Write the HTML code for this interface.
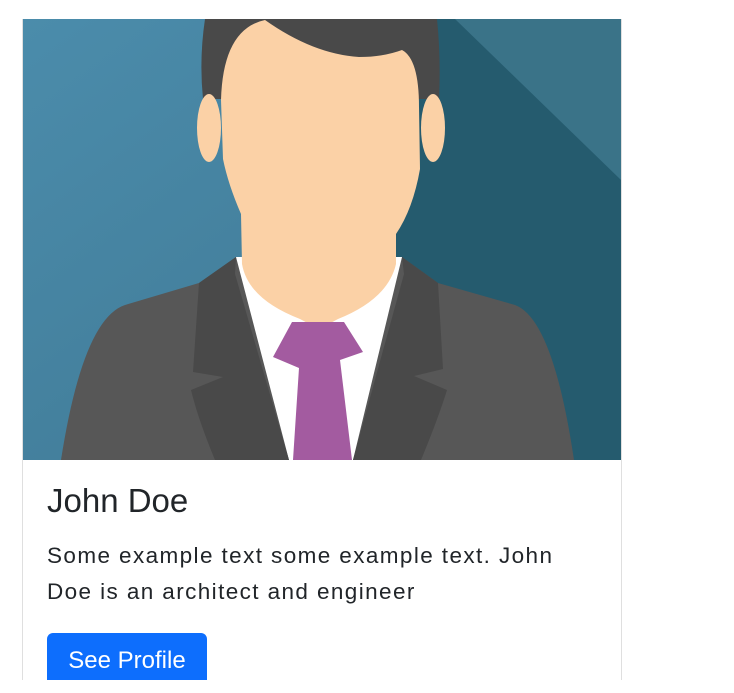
<!DOCTYPE html>
<html><head><meta charset="utf-8"><style>
html,body{margin:0;padding:0;background:#fff;width:734px;height:693px;overflow:hidden;font-family:"Liberation Sans",sans-serif;}
.card{position:absolute;left:22px;top:19px;width:598px;height:661px;border:1px solid #dfdfdf;border-top:none;border-bottom:none;overflow:hidden}
svg{display:block}
.t{position:absolute;left:24px;top:463px;font-size:33px;color:#212529;margin:0;font-weight:normal;white-space:nowrap}
.p{position:absolute;left:24px;top:519px;font-size:22.5px;line-height:36px;color:#212529;width:545px;margin:0;letter-spacing:1.4px}
.b{position:absolute;left:24px;top:614px;width:160px;height:60px;background:#0d6efd;border-radius:6px;color:#fff;font-size:24px;text-align:center;line-height:56px}
</style></head><body>
<div class="card">
<svg width="598" height="441" viewBox="0 0 598 441">
<defs><linearGradient id="g" x1="0" y1="0" x2="1" y2="1"><stop offset="0" stop-color="#4b8cab"/><stop offset="1" stop-color="#3d7590"/></linearGradient></defs>
<rect width="598" height="441" fill="url(#g)"/>
<polygon points="370,0 598,0 598,441 370,441" fill="#3a7388"/>
<polygon points="370,0 432,0 598,161 598,441 370,441" fill="#255b6e"/>
<path d="M182,0 L414,0 Q418,40 416,80 L180,80 Q176,40 182,0 Z" fill="#494949"/>
<ellipse cx="186" cy="109" rx="12" ry="34" fill="#fbd1a6"/>
<ellipse cx="410" cy="109" rx="12" ry="34" fill="#fbd1a6"/>
<path d="M213,238 L379,238 L382,280 L330,441 L266,441 L210,260 Z" fill="#fff"/>
<path d="M242,1 Q290,35 336,38 Q360,38 379,31 Q396,40 396,88 L397,150 Q390,190 373,215 L373,245 Q365,280 315,300 L300,308 L292,308 L277,300 Q225,280 219,245 L218,195 Q205,165 200,140 L198,81 Q200,10 242,1 Z" fill="#fbd1a6"/>
<path d="M38,441 Q60,300 102,286 L176,264 L213,238 L266,441 Z" fill="#575757"/>
<path d="M551,441 Q530,300 492,286 L415,264 L379,238 L330,441 Z" fill="#575757"/>
<path d="M213,238 L176,264 L170,353 L200,358 L168,371 Q175,400 192,441 L266,441 L212,255 Z" fill="#494949"/>
<path d="M379,238 L415,264 L420,350 L391,357 L424,371 Q415,400 398,441 L330,441 L381,255 Z" fill="#494949"/>
<path d="M269,303 L321,303 L340,333 L317,341 L329,441 L270,441 L276,349 L250,338 Z" fill="#a35ba0"/>
</svg>
<h5 class="t">John Doe</h5>
<p class="p">Some example text some example text. John Doe is an architect and engineer</p>
<div class="b">See Profile</div>
</div>
</body></html>
